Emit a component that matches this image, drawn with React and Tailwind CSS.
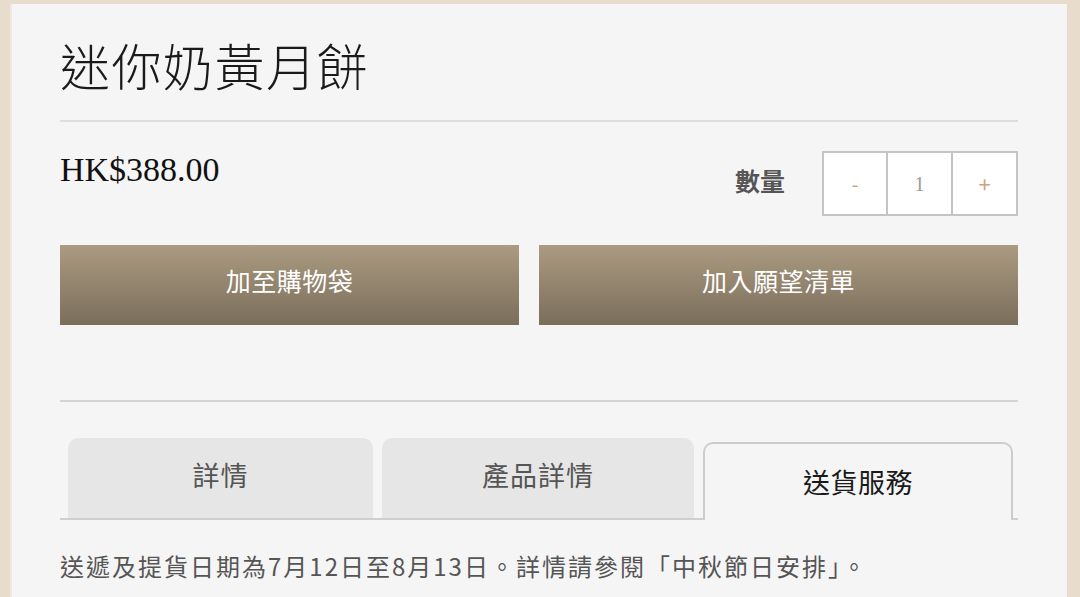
import React from "react";

const cjk = { fontFamily: '"Noto Sans CJK TC", "Noto Sans", sans-serif' };
const serif = { fontFamily: '"Liberation Serif", "Noto Serif", serif' };

export default function App() {
  return (
    <div className="w-[1080px] h-[597px] overflow-hidden bg-[#e8dccc] pt-[4px] pl-[10px] pr-[13px]" style={cjk}>
      <div className="h-full bg-[#f5f5f5] border-l-2 border-[#efe8de] pl-[48px] pr-[49px]">
        <h1 className="pt-[30px] pb-[26px] text-[50px] leading-[60px] font-light text-[#1a1a1a] border-b-2 border-[#dedede] tracking-[1.5px]">
          迷你奶黃月餅
        </h1>

        <div className="flex items-start justify-between pt-[29px]">
          <div className="text-[34px] leading-[38px] text-[#111]" style={serif}>HK$388.00</div>
          <div className="flex items-center">
            <span className="text-[25px] leading-[30px] font-bold text-[#555] mr-[37px] mb-[8px]">數量</span>
            <div className="flex h-[65px] border-2 border-[#c4c4c4] bg-white">
              <div className="w-[62px] flex items-center justify-center text-[20px] text-[#c9a47e]">-</div>
              <div className="w-[67px] flex items-center justify-center border-l-2 border-r-2 border-[#c4c4c4] text-[20px] text-[#999]" style={serif}>1</div>
              <div className="w-[63px] flex items-center justify-center text-[22px] text-[#c9a47e]">+</div>
            </div>
          </div>
        </div>

        <div className="flex gap-[20px] mt-[29px]">
          <button className="w-[459px] h-[80px] bg-gradient-to-b from-[#ab9b81] to-[#7b6e5b] text-white text-[25px] font-normal tracking-[0.5px] pb-[8px]">
            加至購物袋
          </button>
          <button className="flex-1 h-[80px] bg-gradient-to-b from-[#ab9b81] to-[#7b6e5b] text-white text-[25px] font-normal tracking-[0.5px] pb-[8px]">
            加入願望清單
          </button>
        </div>

        <div className="mt-[75px] border-t-2 border-[#d4d4d4]" />

        <div className="mt-[36px] flex items-end">
          <div className="flex-1 flex items-end border-b-2 border-[#cfcfcf] pl-[8px] self-stretch">
            <div className="w-[305px] h-[80px] bg-[#e6e6e6] rounded-t-[10px] flex items-center justify-center text-[27px] tracking-[1px] text-[#555] pb-[6px]">
              詳情
            </div>
            <div className="w-[312px] h-[80px] ml-[9px] mr-[9px] bg-[#e6e6e6] rounded-t-[10px] flex items-center justify-center text-[27px] tracking-[1px] text-[#555] pb-[6px]">
              產品詳情
            </div>
          </div>
          <div className="w-[311px] h-[78px] border-2 border-b-0 border-[#cccccc] rounded-t-[10px] flex items-center justify-center text-[27px] tracking-[0.5px] text-[#1a1a1a]">
            送貨服務
          </div>
          <div className="w-[5px] self-stretch border-b-2 border-[#cfcfcf]" />
        </div>

        <p className="mt-[30px] text-[24px] leading-[32px] tracking-[2px] text-[#555]">
          送遞及提貨日期為7月12日至8月13日。詳情請參閱「中秋節日安排」。
        </p>
      </div>
    </div>
  );
}
